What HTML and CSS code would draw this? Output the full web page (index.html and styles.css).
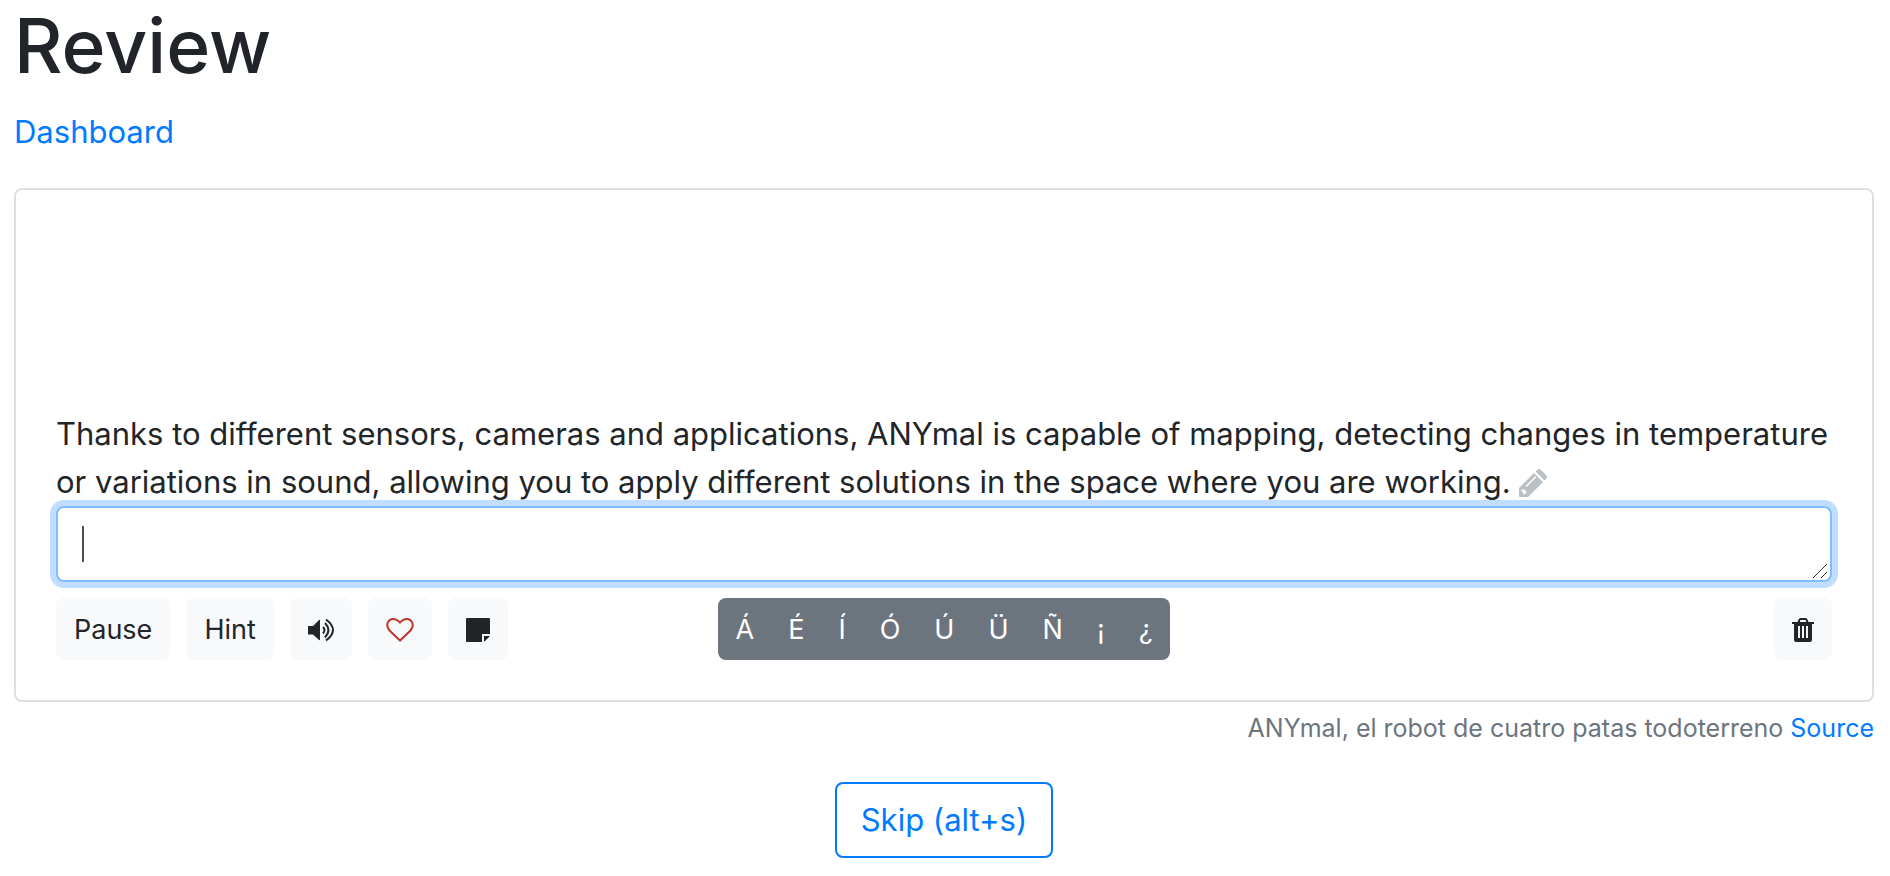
FILE: index.html
```
<!DOCTYPE html>
<html lang="en">
  <head>
    <meta charset="UTF-8" />
    <meta name="viewport" content="width=device-width, initial-scale=1.0" />
    <title>Review</title>
    <link rel="stylesheet" href="styles.css">
  </head>
  <body>
    <h1>Review</h1>
    <p class="nav"><a href="#">Dashboard</a></p>

    <div class="card">
      <div class="sentence">
        <label for="answer">Thanks to different sensors, cameras and applications, ANYmal is capable of mapping, detecting changes in temperature or variations in sound, allowing you to apply different solutions in the space where you are working.</label>
        <a href="#" class="edit" aria-label="Edit"><svg width="28" height="28" viewBox="0 0 28 28">
          <path fill-rule="evenodd" d="M0 19 15 4 24 13 9 28H1Q0 28 0 27ZM2.500 20.500V22.500L4 23V25H6L7.500 23.500 6.500 21.500 4.500 20.500ZM6.500 17 7.500 18 17.500 8 16.500 7Z"/>
          <path d="M16.500 2.500 18 1Q20-1 22 1L27 6Q29 8 27 10L25.500 11.500Z"/>
        </svg></a>
      </div>

      <div class="answer">
        <textarea id="answer" rows="1" autofocus></textarea>
        <span class="caret"></span>
        <svg class="grip" width="16" height="16" viewBox="0 0 16 16"><path d="M1 15 15 1M9 15 15 9"/></svg>
      </div>

      <div class="toolbar">
        <div class="tools">
          <button type="button">Pause</button>
          <button type="button">Hint</button>
          <button type="button" aria-label="Listen"><svg width="26" height="24" viewBox="0 0 26 24">
            <path d="M0 8.500Q0 8 .5 8H5L11 2Q12 1.500 12 2.500V21.500Q12 22.500 11 22L5 16.500H.5Q0 16.500 0 16Z"/>
            <path class="line" d="M15 9Q18 12 15 15.500M17 5Q24 12 17 19.500M18 1.500Q32 12 18 22.500"/>
          </svg></button>
          <button type="button" class="like" aria-label="Like"><svg width="28" height="24" viewBox="0 0 28 24">
            <path class="line" d="M14 22.500 3.500 12.500C-1 7 2 1 7.500 1 11 1 12 2.500 14 4.500 16 2.500 17 1 20.500 1 26 1 29 7 24.500 12.500Z"/>
          </svg></button>
          <button type="button" aria-label="Note"><svg width="24" height="24" viewBox="0 0 24 24">
            <path d="M1 0H23Q24 0 24 1V16H16V24H1Q0 24 0 23V1Q0 0 1 0ZM18 18H24L18 24Z"/>
          </svg></button>
        </div>

        <div class="letters">
          <button type="button">Á</button>
          <button type="button">É</button>
          <button type="button">Í</button>
          <button type="button">Ó</button>
          <button type="button">Ú</button>
          <button type="button">Ü</button>
          <button type="button">Ñ</button>
          <button type="button">¡</button>
          <button type="button">¿</button>
        </div>

        <div class="tools end">
          <button type="button" aria-label="Delete"><svg width="22" height="24" viewBox="0 0 22 24">
            <path fill-rule="evenodd" d="M0 4H5.500L6.500 1.500Q7 0 8.500 0H13.500Q15 0 15.500 1.500L16.500 4H22V6H20V22Q20 24 18 24H4Q2 24 2 22V6H0ZM8 4H14V3Q14 2 13 2H9Q8 2 8 3ZM6 8V20H8V8ZM10 8V20H12V8ZM14 8V20H16V8Z"/>
          </svg></button>
        </div>
      </div>
    </div>

    <p class="source">ANYmal, el robot de cuatro patas todoterreno <a href="#">Source</a></p>

    <div class="actions">
      <button type="button" class="skip" accesskey="s">Skip (alt+s)</button>
    </div>
  </body>
</html>
```

FILE: styles.css
```
* {
  box-sizing: border-box;
}

body {
  margin: 0;
  padding: 0 16px 0 14px;
  color: #212529;
  background-color: #fff;
  font-family: Inter, "Helvetica Neue", Arial, sans-serif;
  font-size: 31px;
  line-height: 48px;
}

h1 {
  margin: 0 0 16px;
  font-size: 75px;
  font-weight: 500;
  line-height: 92px;
}

p {
  margin: 0;
}

a {
  color: #007bff;
  text-decoration: none;
}

svg {
  fill: currentColor;
}

.line {
  fill: none;
  stroke: currentColor;
  stroke-width: 2;
}

.nav {
  margin-bottom: 32px;
}

/* Card */
.card {
  padding: 40px;
  border: 2px solid #dfdfdf;
  border-radius: 8px;
}

.sentence {
  padding-top: 180px;
}

.edit {
  color: #bbc0c4;
}

.edit svg {
  vertical-align: -4px;
}

.answer {
  position: relative;
  display: flex;
}

textarea {
  width: 100%;
  height: 76px;
  padding: 12px 24px;
  border: 2px solid #80bdff;
  border-radius: 8px;
  outline: none;
  box-shadow: 0 0 0 6px #c2deff;
  color: #495057;
  caret-color: transparent;
  font: inherit;
  resize: none;
}

.caret {
  position: absolute;
  top: 20px;
  left: 26px;
  width: 2px;
  height: 36px;
  background-color: #495057;
}

.grip {
  position: absolute;
  right: 4px;
  bottom: 3px;
  stroke: #333;
  stroke-width: 1;
}

/* Buttons under the answer box */
.toolbar {
  display: grid;
  grid-template-columns: 1fr auto 1fr;
  margin-top: 16px;
}

.tools {
  display: flex;
  gap: 16px;
}

.end {
  justify-content: flex-end;
}

button {
  padding: 9px 16px 7px;
  border: 2px solid #f8f9fa;
  border-radius: 8px;
  background-color: #f8f9fa;
  color: #212529;
  font-family: inherit;
  font-size: 27px;
  line-height: 42px;
  cursor: pointer;
}

button svg {
  display: block;
}

.like {
  color: #bd362f;
}

.letters {
  display: flex;
  border-radius: 8px;
  background-color: #6c757d;
}

.letters button {
  border-color: transparent;
  background-color: transparent;
  color: #fff;
}

.letters button + button {
  margin-left: -2px;
}

.source {
  margin-top: 2px;
  color: #6c757d;
  font-size: 25px;
  text-align: right;
}

.actions {
  margin-top: 30px;
  text-align: center;
}

.skip {
  padding: 12px 24px;
  border-color: #007bff;
  background-color: transparent;
  color: #007bff;
  font-size: 31px;
  line-height: 48px;
}
```
